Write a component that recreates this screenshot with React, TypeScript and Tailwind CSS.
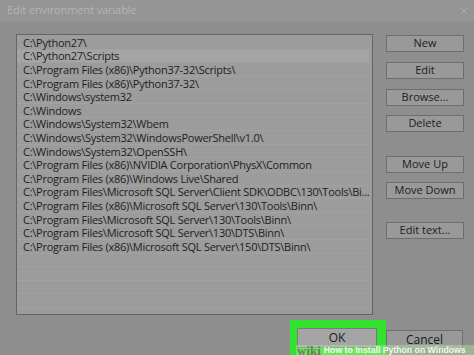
import { X } from "lucide-react";

const paths = [
  "C:\\Python27\\",
  "C:\\Python27\\Scripts",
  "C:\\Program Files (x86)\\Python37-32\\Scripts\\",
  "C:\\Program Files (x86)\\Python37-32\\",
  "C:\\Windows\\system32",
  "C:\\Windows",
  "C:\\Windows\\System32\\Wbem",
  "C:\\Windows\\System32\\WindowsPowerShell\\v1.0\\",
  "C:\\Windows\\System32\\OpenSSH\\",
  "C:\\Program Files (x86)\\NVIDIA Corporation\\PhysX\\Common",
  "C:\\Program Files (x86)\\Windows Live\\Shared",
  "C:\\Program Files\\Microsoft SQL Server\\Client SDK\\ODBC\\130\\Tools\\Bi...",
  "C:\\Program Files (x86)\\Microsoft SQL Server\\130\\Tools\\Binn\\",
  "C:\\Program Files\\Microsoft SQL Server\\130\\Tools\\Binn\\",
  "C:\\Program Files\\Microsoft SQL Server\\130\\DTS\\Binn\\",
  "C:\\Program Files (x86)\\Microsoft SQL Server\\150\\DTS\\Binn\\",
];

// spare rows below the entries, they only show the faint separators
const emptyRows = 4;

function SideButton({ label, className = "" }: { label: string; className?: string }) {
  return (
    <div
      className={`h-[17px] w-[78px] border border-[#6e6e6e] bg-[#999999] flex items-center justify-center text-[11px] text-[#1c1c1c] ${className}`}
    >
      {label}
    </div>
  );
}

export default function App() {
  return (
    <div
      className="relative w-[474px] h-[355px] overflow-hidden bg-[#8e8e8e]"
      style={{ fontFamily: '"Open Sans", "Noto Sans", sans-serif' }}
    >
      {/* title bar */}
      <div className="h-[21px] bg-[#959595] flex items-center justify-between pl-[7px] pr-[4px]">
        <span className="text-[11px] tracking-[-0.1px] text-[#b4b4b4]">Edit environment variable</span>
        <X className="w-[12px] h-[12px] text-[#b0b0b0]" strokeWidth={1.5} />
      </div>

      <div className="flex pl-[16px] pt-[13px]">
        {/* path list */}
        <div className="w-[357px] h-[281px] border border-[#656565] bg-[#9c9c9c] pt-[1px] pr-[3px] overflow-hidden">
          {paths.map((p, i) => (
            <div
              key={p}
              className={`h-[13.6px] flex items-center pl-[6px] text-[11px] tracking-[-0.25px] leading-none text-[#1e1e1e] whitespace-nowrap border-b border-[#a2a2a2] ${
                i === 1 ? "bg-[#a5a5a5]" : ""
              }`}
            >
              {p}
            </div>
          ))}
          {Array.from({ length: emptyRows }).map((_, i) => (
            <div key={i} className="h-[13.6px] border-b border-[#a2a2a2]" />
          ))}
        </div>

        {/* buttons */}
        <div className="ml-[13px] pt-[1px] flex flex-col">
          <SideButton label="New" />
          <SideButton label="Edit" className="mt-[10px]" />
          <SideButton label="Browse..." className="mt-[10px]" />
          <SideButton label="Delete" className="mt-[9px]" />
          <SideButton label="Move Up" className="mt-[24px]" />
          <SideButton label="Move Down" className="mt-[9px]" />
          <SideButton label="Edit text..." className="mt-[23px]" />
        </div>
      </div>

      {/* OK / Cancel */}
      <div className="flex items-start pl-[290px] mt-[5px]">
        <div className="w-[96px] h-[40px] bg-[#33e22f] pt-[8px] pl-[7px]">
          <div className="w-[80px] h-[20px] border border-[#7a7a7a] bg-[#a4a4a4] flex items-center justify-center text-[12px] text-[#1a1a1a]">
            OK
          </div>
        </div>
        <div className="mt-[10px] w-[77px] h-[20px] border border-[#6e6e6e] bg-[#999999] flex items-center justify-center text-[12px] text-[#1a1a1a]">
          Cancel
        </div>
      </div>

      {/* watermark */}
      <div className="absolute left-[296px] right-0 bottom-0 h-[10px] bg-[#b6f0a0]/40 flex items-start pl-[1px] leading-none font-bold whitespace-nowrap">
        <span className="text-[13px] -mt-[1px] text-[#6e7a68]" style={{ fontFamily: '"Liberation Serif", serif' }}>
          wiki
        </span>
        <span className="ml-[3px] mt-[1px] text-[8.7px] text-[#f4f8f0]" style={{ fontFamily: '"Liberation Sans", sans-serif' }}>
          How to Install Python on Windows
        </span>
      </div>
    </div>
  );
}
